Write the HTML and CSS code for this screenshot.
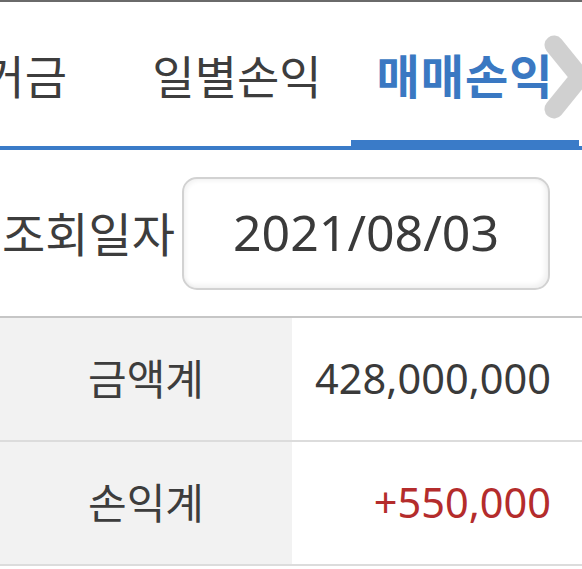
FILE: index.html
```html
<!DOCTYPE html>
<html lang="ko">
<head>
<meta charset="utf-8">
<link rel="stylesheet" href="styles.css">
</head>
<body>
<div class="screen">
  <nav class="tabs">
    <div class="tab-strip">
      <div class="tab tab-first">거금</div>
      <div class="tab">일별손익</div>
      <div class="tab active">매매손익</div>
    </div>
    <svg class="more" width="50" height="90" viewBox="0 0 50 90" aria-hidden="true">
      <polyline points="14,12 40,44 14,76" fill="none" stroke="#c8c8c8" stroke-width="19" stroke-linecap="round" stroke-linejoin="round" opacity="0.85"/>
    </svg>
  </nav>
  <div class="date-row">
    <span class="date-label">조회일자</span>
    <div class="date-box">2021/08/03</div>
  </div>
  <div class="summary">
    <div class="cell head">금액계</div>
    <div class="cell value">428,000,000</div>
    <div class="cell head">손익계</div>
    <div class="cell value plus">+550,000</div>
  </div>
</div>
</body>
</html>
```

FILE: styles.css
```css
html, body {
  margin: 0;
  padding: 0;
  background: #ffffff;
}

.screen {
  width: 582px;
  height: 569px;
  overflow: hidden;
  font-family: "Noto Sans", "Noto Sans CJK KR", sans-serif;
  color: #3d3d3d;
  border-top: 2px solid #6a6a6a;
  box-sizing: border-box;
}

.tabs {
  position: relative;
  height: 148px;
  border-bottom: 4px solid #3a7bc8;
  box-sizing: border-box;
  overflow: hidden;
}

.tab-strip {
  display: flex;
  align-items: flex-end;
  height: 144px;
  margin-left: -120px;
}

.tab {
  flex: none;
  width: 228px;
  height: 144px;
  box-sizing: border-box;
  display: flex;
  align-items: center;
  justify-content: center;
  font-size: 46px;
  line-height: 1;
  padding-top: 4px;
  color: #3d3d3d;
}

.tab-first {
  width: 243px;
  justify-content: flex-end;
  padding-right: 56px;
}

.tab.active {
  color: #3a78c2;
  font-weight: 700;
  font-size: 47px;
  letter-spacing: 1px;
  border-bottom: 6px solid #3a7bc8;
  padding-top: 10px;
}

.more {
  position: absolute;
  right: -8px;
  top: 31px;
}

.date-row {
  height: 168px;
  display: flex;
  align-items: center;
  padding-left: 2px;
  box-sizing: border-box;
  border-bottom: 2px solid #c6c6c6;
}

.date-label {
  font-size: 47px;
  line-height: 1;
  width: 180px;
  flex: none;
  padding-top: 2px;
}

.date-box {
  width: 368px;
  height: 113px;
  box-sizing: border-box;
  border: 2px solid #d2d2d2;
  border-radius: 15px;
  box-shadow: inset -3px -3px 5px rgba(0, 0, 0, 0.06), inset 2px 2px 4px rgba(0, 0, 0, 0.05);
  display: flex;
  align-items: center;
  justify-content: center;
  font-size: 50px;
  line-height: 1;
  color: #3a3a3a;
  padding-bottom: 2px;
}

.summary {
  display: grid;
  grid-template-columns: 292px 1fr;
}

.cell {
  height: 124px;
  box-sizing: border-box;
  border-bottom: 2px solid #dcdcdc;
  display: flex;
  align-items: center;
  line-height: 1;
}

.head {
  background: #f2f2f2;
  justify-content: center;
  font-size: 42px;
  color: #3d3d3d;
}

.value {
  justify-content: flex-end;
  padding-right: 31px;
  font-size: 41.5px;
  color: #3a3a3a;
}

.value.plus {
  color: #b42c2c;
}
```
